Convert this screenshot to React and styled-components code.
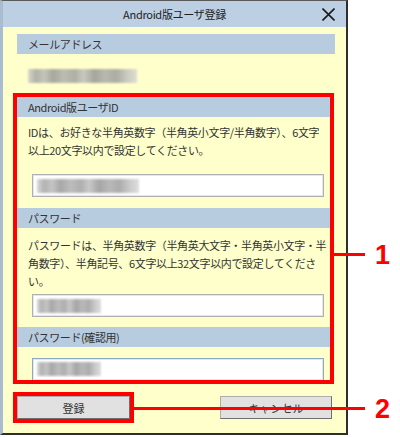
import styled, { createGlobalStyle } from "styled-components";

const GlobalStyle = createGlobalStyle`
    html, body {
        margin: 0;
        padding: 0;
        background: #fff;
    }
    body {
        font-family: "Noto Sans CJK JP", "Noto Sans", sans-serif;
    }
`;

const Stage = styled.div`
    width: 400px;
    height: 437px;
    overflow: hidden;
    background: #fff;
`;

const Window = styled.div`
    width: 348px;
    height: 435px;
    box-sizing: border-box;
    display: flex;
    flex-direction: column;
    background: #ffffcc;
    border-top: 1px solid #5a5a5a;
    border-left: 3px solid #a9bcd0;
    border-right: 2px solid #2e2e2e;
    border-bottom: 2px solid #2e2e2e;
`;

const TitleBar = styled.div`
    height: 26px;
    flex-shrink: 0;
    display: grid;
    grid-template-columns: 1fr auto 1fr;
    align-items: center;
    background: #bccfe3;
`;

const Title = styled.div`
    grid-column: 2;
    font-size: 11px;
    letter-spacing: -0.3px;
    color: #222;
`;

const CloseBtn = styled.div`
    grid-column: 3;
    justify-self: end;
    margin-right: 11px;
    width: 13px;
    height: 13px;
    display: flex;
`;

const Body = styled.div`
    flex: 1;
    display: flex;
    flex-direction: column;
    padding: 0 11px 0 10px;
`;

const SectionHeader = styled.div`
    height: 20px;
    flex-shrink: 0;
    display: flex;
    align-items: center;
    padding-left: 11px;
    margin: ${p => p.$top || 0}px 0 0 ${p => p.$inset || 0}px;
    background: #b8cce0;
    font-size: 11px;
    letter-spacing: -0.4px;
    color: #333;
`;

const Mask = styled.div`
    width: ${p => p.$w}px;
    height: 14px;
    flex-shrink: 0;
    background: linear-gradient(90deg, #cfcfcf 0%, #a0a0a0 7%, #b6b6b6 15%, #929292 23%,
        #adadad 33%, #9b9b9b 43%, #bcbcbc 51%, #909090 61%, #a8a8a8 71%, #989898 81%,
        #bfbfbf 91%, #d6d6d6 100%);
    filter: blur(1.1px);
    opacity: 0.8;
`;

const MailValue = styled.div`
    margin: 15px 0 10px 15px;
    display: flex;
`;

const FieldGroup = styled.div`
    position: relative;
    display: flex;
    flex-direction: column;
    border: 4px solid #ff0000;
    margin-right: 1px;
`;

const Note = styled.div`
    padding: ${p => p.$top}px 8px 0 11px;
    font-size: 11px;
    line-height: 18px;
    letter-spacing: -0.35px;
    white-space: nowrap;
    color: #333;
`;

const TextBox = styled.div`
    height: ${p => p.$cut ? 22 : 23}px;
    box-sizing: border-box;
    margin: ${p => p.$top}px 6px 0 15px;
    padding-left: 4px;
    display: flex;
    align-items: ${p => p.$cut ? "flex-start" : "center"};
    padding-top: ${p => p.$cut ? 3 : 0}px;
    background: #fff;
    border: 1px solid ${p => p.$cut ? "#8fa8c2" : "#b0b0b0"};
    border-bottom: ${p => p.$cut ? "none" : "1px solid #b0b0b0"};
    box-shadow: inset 0 0 0 1px #e6e6e6;
`;

const ButtonRow = styled.div`
    margin-top: 8px;
    padding-right: 3px;
    display: flex;
    justify-content: space-between;
    align-items: flex-start;
`;

const Highlight = styled.div`
    position: relative;
    border: 4px solid #ff0000;
    display: flex;
`;

const Button = styled.button`
    width: ${p => p.$w}px;
    height: 23px;
    margin-top: ${p => p.$top || 0}px;
    padding: 0;
    box-sizing: border-box;
    background: #e1e1e1;
    border: 1px solid;
    border-color: #adadad #6f6f6f #6f6f6f #adadad;
    font-family: inherit;
    font-size: 11px;
    color: #333;
`;

const Callout = styled.div`
    position: absolute;
    left: calc(100% + 4px);
    top: ${p => p.$top}px;
    width: ${p => p.$reach}px;
    height: 3px;
    background: #ff0000;
    z-index: 2;
`;

const CalloutNum = styled.span`
    position: absolute;
    left: calc(100% + 10px);
    top: 50%;
    transform: translateY(-50%);
    font-family: "Liberation Sans", Arial, sans-serif;
    font-weight: bold;
    font-size: 27px;
    line-height: 1;
    color: #ff0000;
`;

const App = () => {
    return (
        <Stage>
            <GlobalStyle />
            <Window>
                <TitleBar>
                    <Title>Android版ユーザ登録</Title>
                    <CloseBtn>
                        <svg width="13" height="13" viewBox="0 0 13 13">
                            <path d="M0.5 0.5 L12.5 12.5 M12.5 0.5 L0.5 12.5" stroke="#1a1a1a" strokeWidth="1.6" />
                        </svg>
                    </CloseBtn>
                </TitleBar>
                <Body>
                    <SectionHeader $top={7} $inset={4}>メールアドレス</SectionHeader>
                    <MailValue><Mask $w={109} /></MailValue>

                    <FieldGroup>
                        <SectionHeader>Android版ユーザID</SectionHeader>
                        <Note $top={6}>
                            IDは、お好きな半角英数字（半角英小文字/半角数字）、6文字<br />
                            以上20文字以内で設定してください。
                        </Note>
                        <TextBox $top={15}><Mask $w={102} /></TextBox>

                        <SectionHeader $top={11}>パスワード</SectionHeader>
                        <Note $top={8}>
                            パスワードは、半角英数字（半角英大文字・半角英小文字・半<br />
                            角数字）、半角記号、6文字以上32文字以内で設定してくださ<br />
                            い。
                        </Note>
                        <TextBox $top={4}><Mask $w={64} /></TextBox>

                        <SectionHeader $top={10}>パスワード(確認用)</SectionHeader>
                        <TextBox $top={11} $cut><Mask $w={64} /></TextBox>

                        <Callout $top={156} $reach={31}>
                            <CalloutNum>1</CalloutNum>
                        </Callout>
                    </FieldGroup>

                    <ButtonRow>
                        <Highlight>
                            <Button $w={113}>登録</Button>
                            <Callout $top={11} $reach={231}>
                                <CalloutNum>2</CalloutNum>
                            </Callout>
                        </Highlight>
                        <Button $w={112} $top={4}>キャンセル</Button>
                    </ButtonRow>
                </Body>
            </Window>
        </Stage>
    );
};

export default App;
